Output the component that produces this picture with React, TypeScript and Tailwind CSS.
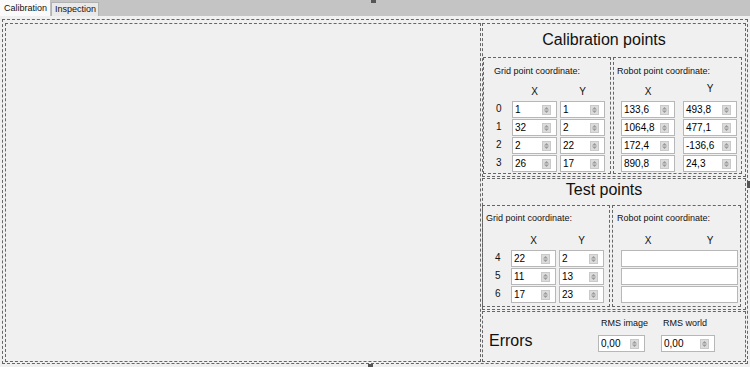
import React from 'react';

const dash = 'border border-dashed border-[#666]';

const Spinner = () => (
  <div className="w-[9px] h-[10px] bg-[#dcdcdc] border border-[#c9c9c9] flex items-center justify-center shrink-0">
    <svg width="5" height="6" viewBox="0 0 5 6">
      <path d="M2.5 0 L5 2.5 L0 2.5 Z" fill="#9a9a9a" />
      <path d="M0 3.5 L5 3.5 L2.5 6 Z" fill="#9a9a9a" />
    </svg>
  </div>
);

const NumBox = ({ value, w }: { value: string; w: string }) => (
  <div className={`${w} h-[17px] bg-white border border-[#b7b7b7] flex items-center pl-[2px] pr-[5px]`}>
    <span className="flex-1 text-[10px] leading-none text-black">{value}</span>
    <Spinner />
  </div>
);

const calGrid = [
  ['0', '1', '1'],
  ['1', '32', '2'],
  ['2', '2', '22'],
  ['3', '26', '17'],
];
const calRobot = [
  ['133,6', '493,8'],
  ['1064,8', '477,1'],
  ['172,4', '-136,6'],
  ['890,8', '24,3'],
];
const testGrid = [
  ['4', '22', '2'],
  ['5', '11', '13'],
  ['6', '17', '23'],
];

const GridBox = ({ rows, labelPl, pt, headMt }: { rows: string[][]; labelPl: string; pt: string; headMt: string }) => (
  <div className={`${dash} w-[128px] h-full ${pt}`}>
    <div className={`text-[9px] leading-[11px] whitespace-nowrap ${labelPl}`}>Grid point coordinate:</div>
    <div className={`grid grid-cols-[25px_45px_45px] gap-x-[3px] text-[10px] leading-[12px] ${headMt}`}>
      <div />
      <div className="text-center">X</div>
      <div className="text-center">Y</div>
    </div>
    <div className="flex flex-col gap-px mt-[3px]">
      {rows.map((r) => (
        <div key={r[0]} className="grid grid-cols-[25px_45px_45px] gap-x-[3px] items-center">
          <div className="text-[10px] pl-[12px] -mt-[3px]">{r[0]}</div>
          <NumBox value={r[1]} w="w-[45px]" />
          <NumBox value={r[2]} w="w-[45px]" />
        </div>
      ))}
    </div>
  </div>
);

export default function App() {
  return (
    <div className="relative w-[750px] h-[367px] bg-[#f0f0f0] overflow-hidden font-['Liberation_Sans',Arial,sans-serif] text-[#111]">
      {/* tab strip */}
      <div className="h-[16px] bg-[#c4c4c4] flex items-end">
        <div className="h-[16px] w-[51px] pl-[4px] bg-[#fafafa] border-r border-[#c0c0c0] text-[9px] leading-[16px]">Calibration</div>
        <div className="h-[14px] w-[48px] pl-[3px] bg-[#e9e9e9] border border-b-0 border-[#b2b2b2] text-[9px] leading-[13px]">Inspection</div>
      </div>

      {/* tab page */}
      <div className="h-[351px] pt-[3px] px-[2px]">
        <div className={`${dash} h-[345px] flex gap-px pt-[3px] pl-[2px] pr-px pb-px`}>
          <div className={`${dash} w-[476px] h-full`} />

          <div className="w-[264px] h-full flex flex-col gap-px">
            {/* calibration points */}
            <div className={`${dash} h-[154px] flex flex-col pb-[2px]`}>
              <div className="h-[33px] text-[16px] leading-[32px] text-center pr-[20px]">Calibration points</div>
              <div className="flex-1 flex gap-[2px]">
                <GridBox rows={calGrid} labelPl="pl-[10px]" pt="pt-[8px]" headMt="mt-[9px]" />
                <div className={`${dash} w-[129px] h-full pt-[8px]`}>
                  <div className="text-[9px] leading-[11px] pl-[3px] whitespace-nowrap">Robot point coordinate:</div>
                  <div className="flex gap-[8px] pl-[7px] text-[10px] leading-[12px] mt-[9px]">
                    <div className="w-[54px] text-center">X</div>
                    <div className="w-[54px] text-center -mt-[3px]">Y</div>
                  </div>
                  <div className="flex flex-col gap-px mt-[3px] pl-[7px]">
                    {calRobot.map((r) => (
                      <div key={r[0]} className="flex gap-[8px]">
                        <NumBox value={r[0]} w="w-[54px]" />
                        <NumBox value={r[1]} w="w-[54px]" />
                      </div>
                    ))}
                  </div>
                </div>
              </div>
            </div>

            {/* test points */}
            <div className={`${dash} h-[132px] flex flex-col pb-[2px]`}>
              <div className="h-[26px] text-[16px] leading-[22px] text-center pr-[20px]">Test points</div>
              <div className="flex-1 flex gap-[2px] -ml-px">
                <GridBox rows={testGrid} labelPl="pl-[3px]" pt="pt-[7px]" headMt="mt-[11px]" />
                <div className={`${dash} w-[129px] h-full pt-[7px]`}>
                  <div className="text-[9px] leading-[11px] pl-[4px] whitespace-nowrap">Robot point coordinate:</div>
                  <div className="flex gap-[8px] pl-[8px] text-[10px] leading-[12px] mt-[11px]">
                    <div className="w-[54px] text-center">X</div>
                    <div className="w-[54px] text-center">Y</div>
                  </div>
                  <div className="flex flex-col gap-px mt-[3px] pl-[8px]">
                    {[0, 1, 2].map((i) => (
                      <div key={i} className="w-[117px] h-[17px] bg-white border border-[#b7b7b7]" />
                    ))}
                  </div>
                </div>
              </div>
            </div>

            {/* errors */}
            <div className={`${dash} flex-1 flex`}>
              <div className="w-[115px] pl-[6px] pt-[19px] text-[16px] leading-[20px]">Errors</div>
              <div className="w-[47px] pt-[6px]">
                <div className="text-[9px] leading-[11px] pl-[3px] whitespace-nowrap">RMS image</div>
                <div className="mt-[6px]">
                  <NumBox value="0,00" w="w-[47px]" />
                </div>
              </div>
              <div className="w-[54px] pt-[6px] ml-[16px]">
                <div className="text-[9px] leading-[11px] pl-[2px] whitespace-nowrap">RMS world</div>
                <div className="mt-[6px]">
                  <NumBox value="0,00" w="w-[54px]" />
                </div>
              </div>
            </div>
          </div>
        </div>
      </div>

      {/* designer grab handles */}
      <div className="absolute left-[371px] top-0 w-[5px] h-[3px] bg-[#555]" />
      <div className="absolute left-[368px] top-[364px] w-[5px] h-[3px] bg-[#555]" />
      <div className="absolute left-[747px] top-[181px] w-[3px] h-[7px] bg-[#555]" />
    </div>
  );
}
